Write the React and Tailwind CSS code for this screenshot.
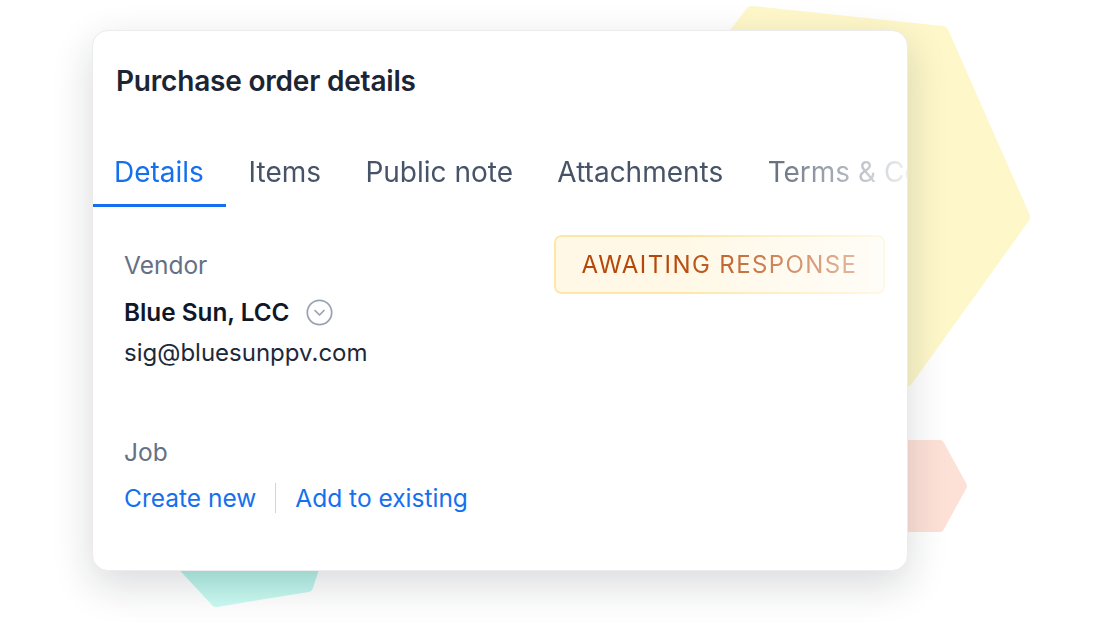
import React from 'react';

const tabs = ['Details', 'Items', 'Public note', 'Attachments', 'Terms & Conditions'];

const ChevronCircle = () => (
    <svg width="27" height="27" viewBox="0 0 27 27" fill="none">
        <circle cx="13.5" cy="13.5" r="12.2" stroke="#98a2b3" strokeWidth="1.7" />
        <path d="M9 11.5 L13.5 16 L18 11.5" stroke="#98a2b3" strokeWidth="1.7" strokeLinecap="round" strokeLinejoin="round" />
    </svg>
);

const Shapes = () => (
    <svg className="absolute inset-0" width="1110" height="636" viewBox="0 0 1110 636">
        <defs>
            <linearGradient id="teal" x1="0" y1="0" x2="0" y2="1">
                <stop offset="0" stopColor="#93e6d6" />
                <stop offset="1" stopColor="#c9faf2" />
            </linearGradient>
        </defs>
        {/* yellow hexagon */}
        <polygon
            points="752,13 942,33 1023,217 906,380 700,380 640,160"
            fill="#fdf7c9"
            stroke="#fdf7c9"
            strokeWidth="14"
            strokeLinejoin="round"
        />
        {/* peach */}
        <polygon
            points="860,444 940,444 963,486 940,528 860,528"
            fill="#fde1d7"
            stroke="#fde1d7"
            strokeWidth="8"
            strokeLinejoin="round"
        />
        {/* teal */}
        <polygon
            points="140,520 216,602 308,587 330,520"
            fill="url(#teal)"
            stroke="url(#teal)"
            strokeWidth="10"
            strokeLinejoin="round"
        />
    </svg>
);

export default function App() {
    return (
        <div
            className="relative w-[1110px] h-[636px] bg-white overflow-hidden"
            style={{ fontFamily: 'Inter, "Noto Sans", sans-serif' }}
        >
            <Shapes />

            <div className="relative pl-[92px] pt-[30px]">
                <div className="relative w-[816px] h-[541px] bg-white rounded-[16px] border border-[#ececec] shadow-[0_14px_40px_rgba(16,24,40,0.16)] overflow-hidden">
                    {/* Title */}
                    <h1 className="pl-[23px] pt-[34px] text-[28px] leading-[32px] font-semibold text-[#1d2433] tracking-[-0.2px]">
                        Purchase order details
                    </h1>

                    {/* Tabs */}
                    <div className="mt-[58px] flex whitespace-nowrap [mask-image:linear-gradient(to_right,#000_80%,transparent_102%)] [-webkit-mask-image:linear-gradient(to_right,#000_80%,transparent_102%)]">
                        {tabs.map((t, i) => (
                            <div
                                key={t}
                                className={`pb-[15px] text-[28px] leading-[34px] border-b-[3px] ${
                                    i === 0
                                        ? 'pl-[21px] pr-[22.5px] text-[#1570ef] border-[#1570ef]'
                                        : 'px-[22.2px] text-[#475467] border-transparent'
                                }`}
                            >
                                {t}
                            </div>
                        ))}
                    </div>

                    {/* Body */}
                    <div className="flex justify-between pl-[31px] pr-[22px] pt-[28px]">
                        <div className="pt-[15px] text-[24px] leading-[30px]">
                            <div className="text-[#667085] text-[24.5px]">Vendor</div>
                            <div className="mt-[17px] flex items-center gap-[16px]">
                                <span className="font-semibold text-[#101828] text-[24.3px]">Blue Sun, LCC</span>
                                <ChevronCircle />
                            </div>
                            <div className="mt-[11px] text-[#1d2939]">sig@bluesunppv.com</div>

                            <div className="mt-[69px] text-[#667085] text-[24.5px]">Job</div>
                            <div className="mt-[16px] flex items-center text-[24.5px]">
                                <span className="text-[#1570ef]">Create new</span>
                                <span className="mx-[19px] w-px h-[30px] bg-[#d0d5dd]" />
                                <span className="text-[#1570ef]">Add to existing</span>
                            </div>
                        </div>

                        <div className="w-[331px] h-[59px] flex items-center justify-center rounded-[7px] border-2 border-[#fde7a6] bg-[#fff8e6] [mask-image:linear-gradient(to_right,#000_35%,rgba(0,0,0,0.3)_100%)] [-webkit-mask-image:linear-gradient(to_right,#000_35%,rgba(0,0,0,0.3)_100%)]">
                            <span className="text-[24px] leading-[30px] tracking-[1.4px] text-[#b54708]">
                                AWAITING RESPONSE
                            </span>
                        </div>
                    </div>
                </div>
            </div>
        </div>
    );
}
